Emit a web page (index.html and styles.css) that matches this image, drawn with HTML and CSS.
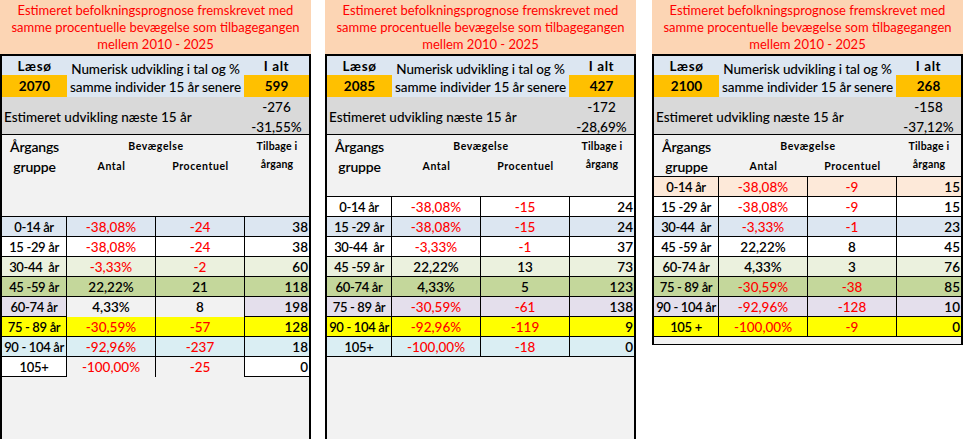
FILE: index.html
```html
<!DOCTYPE html>
<html lang="da">
<head>
<meta charset="utf-8">
<title>Befolkningsprognose Læsø</title>
<link rel="stylesheet" href="styles.css">
</head>
<body>
<div class="page">

  <section class="panel">
    <div class="title">Estimeret befolkningsprognose fremskrevet med<br>samme procentuelle bevægelse som tilbagegangen<br>mellem 2010 - 2025</div>
    <div class="box">
      <div class="info">
        <div class="lbl">Læsø</div>
        <div class="mid">Numerisk udvikling i tal og %<br>samme individer 15 år senere</div>
        <div class="lbl">I alt</div>
        <div class="val">2070</div>
        <div class="val">599</div>
      </div>
      <div class="band">
        <div class="band-label">Estimeret udvikling næste 15 år</div>
        <div class="band-vals"><span>-276</span><span>-31,55%</span></div>
      </div>
      <div class="colhead tall">
        <div class="h-group">Årgangs<br>gruppe</div>
        <div class="h-mov">
          <div class="h-mov-title">Bevægelse</div>
          <div class="h-mov-sub"><span>Antal</span><span>Procentuel</span></div>
        </div>
        <div class="h-back">Tilbage i<br>årgang</div>
      </div>
      <div class="rows">
        <div class="row blue"><div>0-14 år</div><div class="neg">-38,08%</div><div class="neg">-24</div><div>38</div></div>
        <div class="row white"><div>15 -29 år</div><div class="neg">-38,08%</div><div class="neg">-24</div><div>38</div></div>
        <div class="row lgreen"><div>30-44&nbsp; år</div><div class="neg">-3,33%</div><div class="neg">-2</div><div>60</div></div>
        <div class="row green"><div>45 -59 år</div><div>22,22%</div><div>21</div><div>118</div></div>
        <div class="row lav mid-gray"><div>60-74 år</div><div>4,33%</div><div>8</div><div>198</div></div>
        <div class="row yellow"><div>75 - 89 år</div><div class="neg">-30,59%</div><div class="neg">-57</div><div>128</div></div>
        <div class="row teal"><div>90 - 104 år</div><div class="neg">-92,96%</div><div class="neg">-237</div><div>18</div></div>
        <div class="row white mid-gray"><div>105+</div><div class="neg">-100,00%</div><div class="neg">-25</div><div>0</div></div>
      </div>
      <div class="filler"></div>
    </div>
  </section>

  <section class="panel">
    <div class="title">Estimeret befolkningsprognose fremskrevet med<br>samme procentuelle bevægelse som tilbagegangen<br>mellem 2010 - 2025</div>
    <div class="box">
      <div class="info">
        <div class="lbl">Læsø</div>
        <div class="mid">Numerisk udvikling i tal og %<br>samme individer 15 år senere</div>
        <div class="lbl">I alt</div>
        <div class="val">2085</div>
        <div class="val">427</div>
      </div>
      <div class="band">
        <div class="band-label">Estimeret udvikling næste 15 år</div>
        <div class="band-vals"><span>-172</span><span>-28,69%</span></div>
      </div>
      <div class="colhead medium">
        <div class="h-group">Årgangs<br>gruppe</div>
        <div class="h-mov">
          <div class="h-mov-title">Bevægelse</div>
          <div class="h-mov-sub"><span>Antal</span><span>Procentuel</span></div>
        </div>
        <div class="h-back">Tilbage i<br>årgang</div>
      </div>
      <div class="rows">
        <div class="row white"><div>0-14 år</div><div class="neg">-38,08%</div><div class="neg">-15</div><div>24</div></div>
        <div class="row blue"><div>15 -29 år</div><div class="neg">-38,08%</div><div class="neg">-15</div><div>24</div></div>
        <div class="row white"><div>30-44&nbsp; år</div><div class="neg">-3,33%</div><div class="neg">-1</div><div>37</div></div>
        <div class="row lgreen"><div>45 -59 år</div><div>22,22%</div><div>13</div><div>73</div></div>
        <div class="row green"><div>60-74 år</div><div>4,33%</div><div>5</div><div>123</div></div>
        <div class="row lav"><div>75 - 89 år</div><div class="neg">-30,59%</div><div class="neg">-61</div><div>138</div></div>
        <div class="row yellow"><div>90 - 104 år</div><div class="neg">-92,96%</div><div class="neg">-119</div><div>9</div></div>
        <div class="row teal"><div>105+</div><div class="neg">-100,00%</div><div class="neg">-18</div><div>0</div></div>
      </div>
      <div class="filler"></div>
    </div>
  </section>

  <section class="panel last">
    <div class="title">Estimeret befolkningsprognose fremskrevet med<br>samme procentuelle bevægelse som tilbagegangen<br>mellem 2010 - 2025</div>
    <div class="box closed">
      <div class="info">
        <div class="lbl">Læsø</div>
        <div class="mid">Numerisk udvikling i tal og %<br>samme individer 15 år senere</div>
        <div class="lbl">I alt</div>
        <div class="val">2100</div>
        <div class="val">268</div>
      </div>
      <div class="band">
        <div class="band-label">Estimeret udvikling næste 15 år</div>
        <div class="band-vals"><span>-158</span><span>-37,12%</span></div>
      </div>
      <div class="colhead short">
        <div class="h-group">Årgangs<br>gruppe</div>
        <div class="h-mov">
          <div class="h-mov-title">Bevægelse</div>
          <div class="h-mov-sub"><span>Antal</span><span>Procentuel</span></div>
        </div>
        <div class="h-back">Tilbage i<br>årgang</div>
      </div>
      <div class="rows">
        <div class="row peach"><div>0-14 år</div><div class="neg">-38,08%</div><div class="neg">-9</div><div>15</div></div>
        <div class="row white"><div>15 -29 år</div><div class="neg">-38,08%</div><div class="neg">-9</div><div>15</div></div>
        <div class="row blue"><div>30-44&nbsp; år</div><div class="neg">-3,33%</div><div class="neg">-1</div><div>23</div></div>
        <div class="row white"><div>45 -59 år</div><div>22,22%</div><div>8</div><div>45</div></div>
        <div class="row lgreen"><div>60-74 år</div><div>4,33%</div><div>3</div><div>76</div></div>
        <div class="row green"><div>75 - 89 år</div><div class="neg">-30,59%</div><div class="neg">-38</div><div>85</div></div>
        <div class="row lav"><div>90 - 104 år</div><div class="neg">-92,96%</div><div class="neg">-128</div><div>10</div></div>
        <div class="row yellow"><div>105 +</div><div class="neg">-100,00%</div><div class="neg">-9</div><div>0</div></div>
      </div>
      <div class="filler small"></div>
    </div>
  </section>

</div>
</body>
</html>
```

FILE: styles.css
```css
* { box-sizing: border-box; }

html, body {
  margin: 0;
  padding: 0;
  background: #ffffff;
}

body {
  font-family: Lato, "Liberation Sans", sans-serif;
  color: #000;
  width: 964px;
  height: 439px;
  overflow: hidden;
}

.page {
  display: flex;
  gap: 14px;
  height: 439px;
  align-items: flex-start;
}

.panel {
  width: 311px;
  height: 439px;
  display: flex;
  flex-direction: column;
}

.panel.last {
  margin-left: 2px;
  height: auto;
}

.title {
  height: 54px;
  background: #fcd5b4;
  color: #ff0000;
  font-size: 13px;
  line-height: 17px;
  text-align: center;
  padding-top: 2px;
  white-space: nowrap;
}

.box {
  flex: 1;
  display: flex;
  flex-direction: column;
  border: 2px solid #000;
  border-bottom: none;
  background: #f2f2f2;
}

.box.closed {
  flex: none;
  border-bottom: 1px solid #000;
}

/* top info block */
.info {
  display: grid;
  grid-template-columns: 65px 177px 65px;
  grid-template-rows: 19px 22px;
  background: #dce6f1;
  font-size: 13.5px;
}

.info .lbl {
  font-weight: 700;
  text-align: center;
  line-height: 21px;
  letter-spacing: 0.6px;
}

.info .mid {
  grid-column: 2;
  grid-row: 1 / 3;
  text-align: center;
  font-weight: 500;
  line-height: 18px;
  padding-top: 4px;
  white-space: nowrap;
  letter-spacing: -0.1px;
}

.info .val {
  background: #ffc000;
  font-weight: 700;
  text-align: center;
  line-height: 22px;
}

.band {
  height: 38px;
  background: #d9d9d9;
  display: flex;
  align-items: center;
  justify-content: space-between;
  border-bottom: 1px solid #000;
  font-size: 13.5px;
}

.band-label {
  padding-left: 2px;
  padding-top: 2px;
  font-weight: 500;
  white-space: nowrap;
}

.band-vals {
  width: 65px;
  display: flex;
  flex-direction: column;
  align-items: center;
  line-height: 20px;
  padding-top: 2px;
  font-weight: 500;
}

/* column header */
.colhead {
  display: grid;
  grid-template-columns: 65px 178px 64px;
  align-items: start;
  background: #f2f2f2;
}

.colhead.tall { height: 81px; }
.colhead.medium { height: 61px; }
.colhead.short { height: 41px; }

.h-group {
  text-align: center;
  font-size: 14px;
  font-weight: 600;
  line-height: 20px;
  padding-top: 2px;
  letter-spacing: -0.2px;
}

.h-mov {
  display: flex;
  flex-direction: column;
  font-size: 10.5px;
  font-weight: 700;
  letter-spacing: 0.6px;
}

.h-mov-title {
  text-align: center;
  line-height: 20px;
  padding-top: 1px;
}

.h-mov-sub {
  display: grid;
  grid-template-columns: 89px 89px;
  line-height: 20px;
  text-align: center;
}

.h-back {
  text-align: center;
  font-size: 10.5px;
  font-weight: 700;
  letter-spacing: 0.2px;
  line-height: 18px;
  padding-top: 2px;
}

/* data rows */
.rows {
  border-top: 1px solid #000;
}

.row {
  display: grid;
  grid-template-columns: 65px 89px 89px 64px;
  height: 20px;
  border-bottom: 1px solid #000;
  font-size: 13.5px;
  font-weight: 600;
  line-height: 20px;
}

.row > div {
  text-align: center;
  border-right: 1px solid #000;
  white-space: nowrap;
}

.row > div:first-child {
  font-size: 13px;
  letter-spacing: -0.35px;
}

.row > div:last-child {
  border-right: none;
  text-align: right;
  padding-right: 1px;
}

.row .neg {
  color: #ff0000;
  font-weight: 500;
}

.row.blue { background: #dce6f1; }
.row.white { background: #ffffff; }
.row.lgreen { background: #ebf1de; }
.row.green { background: #c4d79b; }
.row.lav { background: #e4dfec; }
.row.yellow { background: #ffff00; }
.row.teal { background: #daeef3; }
.row.peach { background: #fde9d9; }

.row.mid-gray > div:nth-child(2),
.row.mid-gray > div:nth-child(3) { background: #f2f2f2; }

.filler {
  flex: 1;
  background: #f2f2f2;
}

.filler.small {
  flex: none;
  height: 7px;
}
```
